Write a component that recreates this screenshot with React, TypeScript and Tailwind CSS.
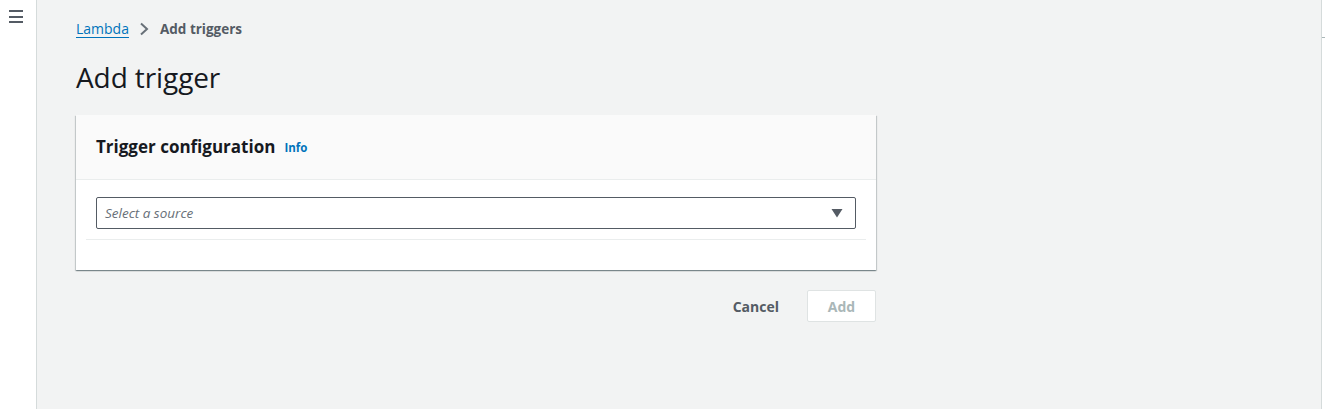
import React from "react";

export default function App() {
  return (
    <div className="flex h-[409px] w-[1325px] bg-white overflow-hidden" style={{ fontFamily: '"Open Sans", "Noto Sans", Arial, sans-serif' }}>
      <aside className="w-[37px] shrink-0 bg-white border-r border-[#d5dbdb] pt-[10px] pl-[9px]">
        <div className="flex flex-col gap-[3.5px] w-[14px]">
          <span className="block h-[2px] bg-[#545b64]" />
          <span className="block h-[2px] bg-[#545b64]" />
          <span className="block h-[2px] bg-[#545b64]" />
        </div>
      </aside>
      <main className="flex-1 bg-[#f2f3f3] border-r border-[#d5dbdb] pl-[39px] pt-[19px]">
        <nav className="flex items-center text-[14px] leading-[20px] h-[20px]">
          <a className="text-[#0073bb] underline underline-offset-[3px] decoration-1">Lambda</a>
          <svg width="12" height="14" viewBox="0 0 12 14" className="ml-[9px] mr-[10px]">
            <path d="M3 1.5 L9 7 L3 12.5" fill="none" stroke="#687078" strokeWidth="2" />
          </svg>
          <span className="font-bold text-[#545b64] text-[13.5px]">Add triggers</span>
        </nav>
        <h1 className="mt-[20px] text-[28px] leading-[36px] text-[#16191f] font-normal tracking-[-0.1px]">Add trigger</h1>
        <section className="mt-[20px] w-[800px] bg-white shadow-[0_1px_1px_0_rgba(0,28,36,0.3),1px_1px_1px_0_rgba(0,28,36,0.15),-1px_1px_1px_0_rgba(0,28,36,0.15)]">
          <header className="h-[65px] bg-[#fafafa] border-b border-[#eaeded] flex items-center px-[20px]">
            <h2 className="text-[17px] font-bold text-[#16191f] leading-[24px]">Trigger configuration</h2>
            <span className="ml-[9px] text-[11.5px] font-bold text-[#0073bb] mt-[2px]">Info</span>
          </header>
          <div className="px-[10px] pt-[17px] pb-[30px]">
            <div className="mx-[10px] h-[32px] border border-[#545b64] rounded-[2px] flex items-center justify-between pl-[8px] pr-[12px]">
              <span className="italic text-[13.5px] text-[#687078]">Select a source</span>
              <svg width="12" height="10" viewBox="0 0 12 10">
                <path d="M0.5 1 L11.5 1 L6 9.5 Z" fill="#545b64" />
              </svg>
            </div>
            <div className="mt-[10px] border-b border-[#eaeded]" />
          </div>
        </section>
        <div className="w-[800px] flex justify-end items-center mt-[20px]">
          <button className="text-[14px] font-bold text-[#545b64] mr-[28px]">Cancel</button>
          <button className="h-[32px] w-[69px] bg-white border border-[#dfe3e3] rounded-[2px] text-[14px] font-bold text-[#aab7b8]">Add</button>
        </div>
      </main>
      <div className="w-[3px] relative">
        <span className="absolute top-[37px] left-0 w-[3px] h-px bg-[#aab7b8]" />
      </div>
    </div>
  );
}
